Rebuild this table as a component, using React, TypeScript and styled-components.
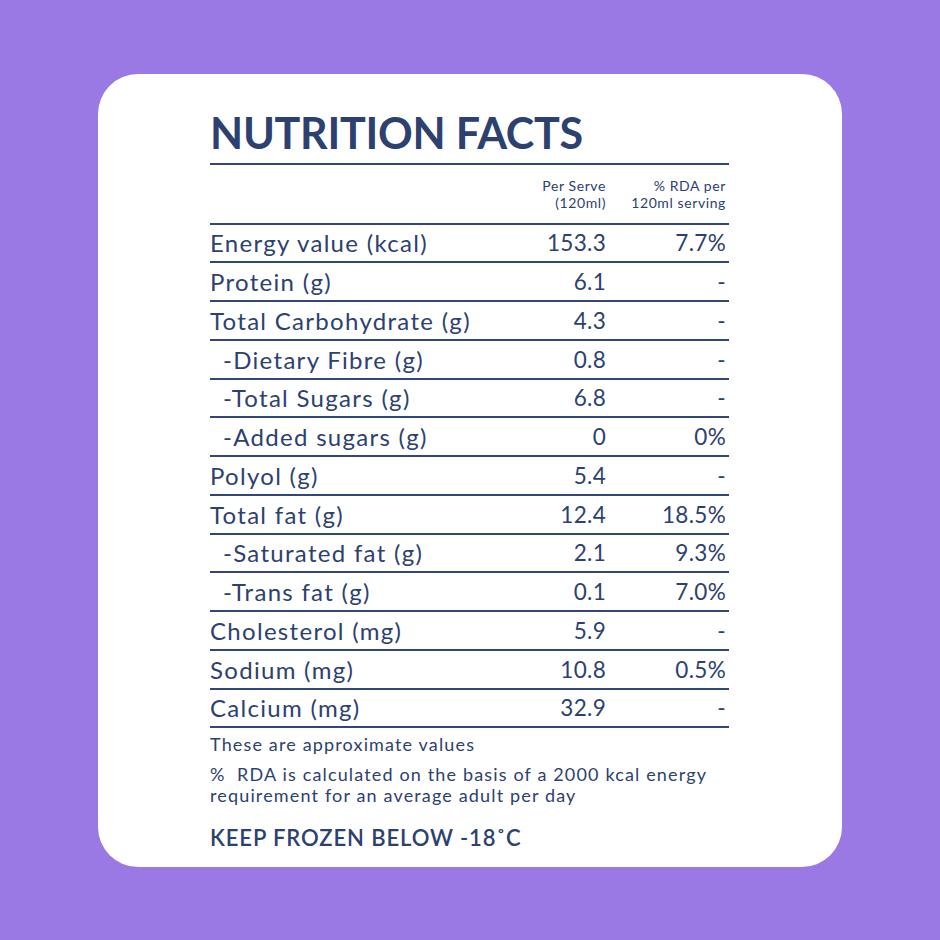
import * as React from 'react';
import styled, { createGlobalStyle } from 'styled-components';

const ink = '#2c4170';
const rule = '#33467a';

const GlobalStyle = createGlobalStyle`
	html, body {
		margin: 0;
		padding: 0;
		background: #9a79e5;
	}
	body {
		font-family: Lato, 'Noto Sans', sans-serif;
	}
`;

const Page = styled.div`
	width: 940px;
	height: 940px;
	display: flex;
	align-items: center;
	justify-content: center;
	background: #9a79e5;
`;

const Card = styled.div`
	box-sizing: border-box;
	width: 744px;
	height: 793px;
	background: #ffffff;
	border-radius: 40px;
	padding: 30px 113px 0 112px;
	color: ${ink};
`;

const Title = styled.h1`
	margin: 0;
	font-size: 43px;
	line-height: 58px;
	height: 59px;
	font-weight: 700;
	letter-spacing: -0.25px;
	border-bottom: 2px solid ${rule};
`;

const Table = styled.div`
	display: flex;
	flex-direction: column;
`;

const Row = styled.div<{ $header?: boolean }>`
	display: grid;
	grid-template-columns: 1fr 100px 120px;
	align-items: center;
	height: ${props => props.$header ? '58px' : '36.75px'};
	border-bottom: 2px solid ${rule};
	padding-right: 3px;
`;

const HeadCell = styled.div`
	font-size: 14px;
	line-height: 17px;
	letter-spacing: 0.6px;
	text-align: right;
`;

const Label = styled.div<{ $sub?: boolean }>`
	font-size: 24px;
	letter-spacing: 1.3px;
	padding-left: ${props => props.$sub ? '13px' : '0'};
	white-space: nowrap;
`;

const Value = styled.div`
	font-size: 22.5px;
	letter-spacing: 0.3px;
	text-align: right;
`;

const Notes = styled.div`
	font-size: 18px;
	line-height: 21px;
	letter-spacing: 1.15px;
	margin-top: 6px;
`;

const Note = styled.p`
	margin: 0 0 9px 0;
`;

const Storage = styled.div`
	margin-top: 18px;
	font-size: 22px;
	font-weight: 600;
	letter-spacing: 0.9px;
`;

interface Nutrient {
	label: string;
	value: string;
	rda: string;
	sub?: boolean;
}

const nutrients: Nutrient[] = [
	{ label: 'Energy value (kcal)', value: '153.3', rda: '7.7%' },
	{ label: 'Protein (g)', value: '6.1', rda: '-' },
	{ label: 'Total Carbohydrate (g)', value: '4.3', rda: '-' },
	{ label: '-Dietary Fibre (g)', value: '0.8', rda: '-', sub: true },
	{ label: '-Total Sugars (g)', value: '6.8', rda: '-', sub: true },
	{ label: '-Added sugars (g)', value: '0', rda: '0%', sub: true },
	{ label: 'Polyol (g)', value: '5.4', rda: '-' },
	{ label: 'Total fat (g)', value: '12.4', rda: '18.5%' },
	{ label: '-Saturated fat (g)', value: '2.1', rda: '9.3%', sub: true },
	{ label: '-Trans fat (g)', value: '0.1', rda: '7.0%', sub: true },
	{ label: 'Cholesterol (mg)', value: '5.9', rda: '-' },
	{ label: 'Sodium (mg)', value: '10.8', rda: '0.5%' },
	{ label: 'Calcium (mg)', value: '32.9', rda: '-' },
];

export default function App() {
	return (
		<Page>
			<GlobalStyle/>
			<Card>
				<Title>NUTRITION FACTS</Title>
				<Table>
					<Row $header>
						<div/>
						<HeadCell>Per Serve<br/>(120ml)</HeadCell>
						<HeadCell>% RDA per<br/>120ml serving</HeadCell>
					</Row>
					{nutrients.map(n => (
						<Row key={n.label}>
							<Label $sub={n.sub}>{n.label}</Label>
							<Value>{n.value}</Value>
							<Value>{n.rda}</Value>
						</Row>
					))}
				</Table>
				<Notes>
					<Note>These are approximate values</Note>
					<Note>%&nbsp; RDA is calculated on the basis of a 2000 kcal energy<br/>requirement for an average adult per day</Note>
				</Notes>
				<Storage>KEEP FROZEN BELOW -18˚C</Storage>
			</Card>
		</Page>
	);
}
